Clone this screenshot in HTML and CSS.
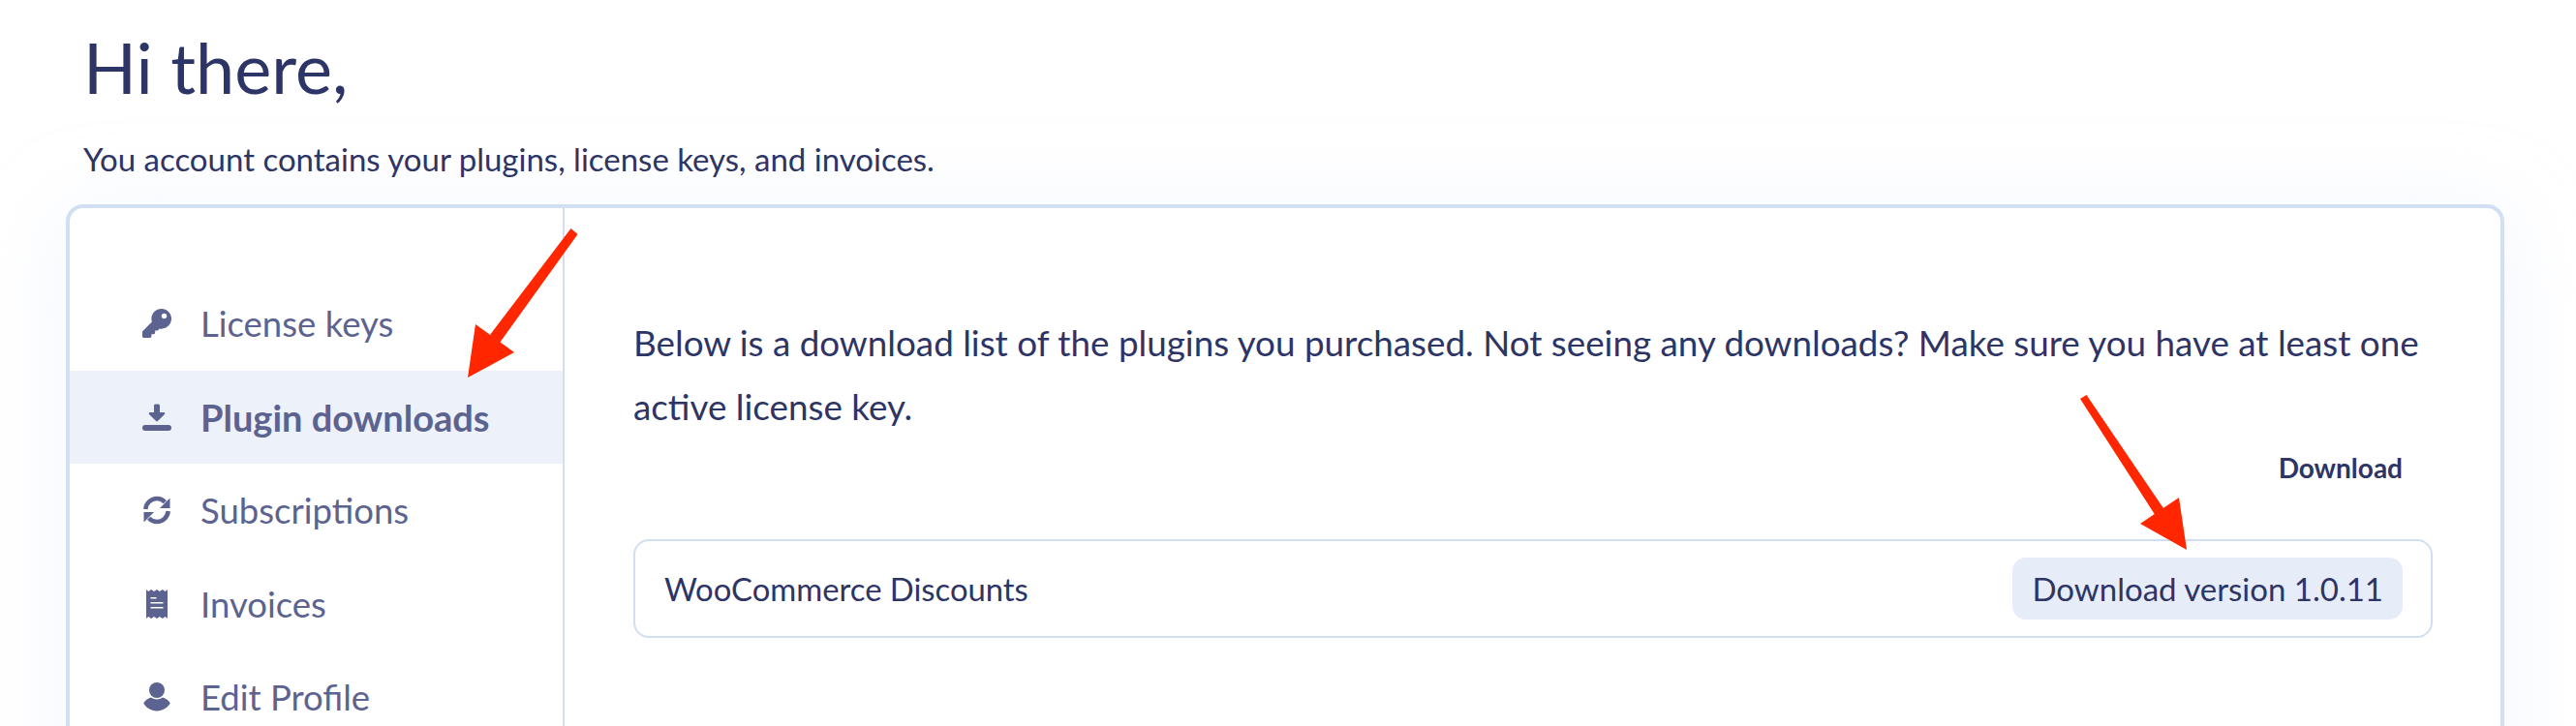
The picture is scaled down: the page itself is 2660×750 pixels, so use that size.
FILE: index.html
```html
<!DOCTYPE html>
<html lang="en">
<head>
<meta charset="utf-8">
<title>Account</title>
<link rel="stylesheet" href="styles.css">
</head>
<body>
<div class="page">
  <h1 class="title">Hi there,</h1>
  <p class="intro">You account contains your plugins, license keys, and invoices.</p>
  <div class="card">
    <nav class="sidebar">
      <a class="nav-item">
        <svg class="icon" viewBox="0 0 512 512"><path d="M512 176.001C512 273.203 433.202 352 336 352c-11.22 0-22.19-1.062-32.827-3.069l-24.012 27.014A23.999 23.999 0 0 1 261.223 384H224v40c0 13.255-10.745 24-24 24h-40v40c0 13.255-10.745 24-24 24H24c-13.255 0-24-10.745-24-24v-78.059c0-6.365 2.529-12.47 7.029-16.971l161.802-161.802C163.108 213.814 160 195.271 160 176 160 78.798 238.797.001 335.999 0 433.488-.001 512 78.511 512 176.001zM336 128c0 26.51 21.49 48 48 48s48-21.49 48-48-21.49-48-48-48-48 21.49-48 48z"/></svg>
        <span>License keys</span>
      </a>
      <a class="nav-item active">
        <svg class="icon" viewBox="0 0 30 30"><path d="M12 3a1.500 1.500 0 0 1 1.500-1.500h3A1.500 1.500 0 0 1 18 3v7h4.200c1 0 1.500 1.200.8 1.900L15.800 19a1.100 1.100 0 0 1-1.600 0L7 11.900c-.7-.7-.2-1.900.8-1.900H12z"/><rect x="0" y="23" width="30" height="6" rx="3"/></svg>
        <span>Plugin downloads</span>
      </a>
      <a class="nav-item">
        <svg class="icon" viewBox="0 0 30 30"><path class="sync-arc" d="M3.300 14C3.800 7.800 9 3 15 3c3.400 0 6.200 1.300 8.300 3.700"/><path d="M28.500 2.500v10.500H18z"/><path class="sync-arc" d="M26.700 16C26.200 22.200 21 27 15 27c-3.400 0-6.200-1.300-8.300-3.700"/><path d="M1.500 27.500V17H12z"/></svg>
        <span>Subscriptions</span>
      </a>
      <a class="nav-item">
        <svg class="icon" viewBox="0 0 30 30"><path fill-rule="evenodd" d="M4 0l2.300 2L9.200 0l3 2L15 0l2.800 2 3-2 2.900 2L26 0v30l-2.300-2-2.900 2-3-2-2.800 2-2.800-2-3 2-2.900-2L4 30zM8.500 8v1.600h6V8zm0 5v1.600h13V13zm0 5v1.600h13V18z"/></svg>
        <span>Invoices</span>
      </a>
      <a class="nav-item">
        <svg class="icon" viewBox="0 0 30 30"><circle cx="15" cy="8" r="8"/><path d="M9 15.500c3.500 2.600 8.500 2.600 12 0 3.300.8 6.300 3.300 7.800 6C26.500 25.800 21 29.500 15 29.500S3.500 25.800 1.200 21.500c1.500-2.700 4.500-5.200 7.800-6z"/></svg>
        <span>Edit Profile</span>
      </a>
    </nav>
    <main class="content">
      <p class="lead">Below is a download list of the plugins you purchased. Not seeing any downloads? Make sure you have at least one active license key.</p>
      <div class="table-head">Download</div>
      <div class="item">
        <span class="item-name">WooCommerce Discounts</span>
        <a class="button">Download version 1.0.11</a>
      </div>
    </main>
  </div>
</div>
<svg class="arrows" viewBox="0 0 2660 750" aria-hidden="true">
  <path d="M589.500 236l7 6-80.500 112-10-8z"/>
  <path d="M491 335l40 29-48 26z"/>
  <path d="M2148 412l6.500-4 81.500 120-10 5z"/>
  <path d="M2250 514l8 54-48-27z"/>
</svg>
</body>
</html>
```
FILE: styles.css
```css
html, body {
  margin: 0;
  height: 750px;
  overflow: hidden;
  background: #fff;
}
.page {
  box-sizing: border-box;
  height: 750px;
  overflow: hidden;
  padding: 0 74px 0 68px;
  font-family: "Lato", "Noto Sans", sans-serif;
  color: #2d3466;
}
.title {
  margin: 0;
  padding: 21px 0 0 18px;
  font-size: 72px;
  line-height: 96px;
  font-weight: 400;
}
.intro {
  margin: 0;
  padding: 27px 0 0 18px;
  font-size: 33px;
  line-height: 40px;
  height: 67px;
}
.card {
  display: flex;
  box-sizing: border-box;
  height: 700px;
  background: #fff;
  border: 4px solid #d2def1;
  border-radius: 18px;
  box-shadow: 0 10px 90px rgba(215, 225, 250, .35);
}
.sidebar {
  box-sizing: border-box;
  flex: 0 0 511px;
  padding-top: 71px;
  border-right: 2px solid #d2def1;
  color: #5c6390;
}
.nav-item {
  display: flex;
  align-items: center;
  gap: 30px;
  height: 96.500px;
  padding-left: 75px;
  font-size: 36.500px;
}
.nav-item.active {
  background: #edf2fa;
  font-weight: 700;
  font-size: 38px;
}
.icon {
  flex: 0 0 30px;
  width: 30px;
  height: 30px;
  fill: #5c6390;
}
.sync-arc {
  fill: none;
  stroke: #5c6390;
  stroke-width: 4.500;
}
.content {
  flex: 1;
  padding: 106px 70px 0 71px;
  font-size: 33px;
}
.lead {
  margin: 0;
  font-size: 36.800px;
  line-height: 66px;
}
.table-head {
  margin-top: 10px;
  padding-right: 31px;
  text-align: right;
  font-size: 28px;
  line-height: 40px;
  font-weight: 700;
}
.item {
  display: flex;
  align-items: center;
  justify-content: space-between;
  box-sizing: border-box;
  height: 102px;
  margin-top: 54px;
  padding: 0 29px 0 30px;
  border: 2px solid #d2def1;
  border-radius: 16px;
}
.item-name {
  font-size: 32.800px;
}
.button {
  padding: 0 20px;
  line-height: 64px;
  background: #e6edf8;
  border-radius: 14px;
}
.arrows {
  position: absolute;
  left: 0;
  top: 0;
  width: 2660px;
  height: 750px;
  fill: #ff2600;
  pointer-events: none;
}
```
